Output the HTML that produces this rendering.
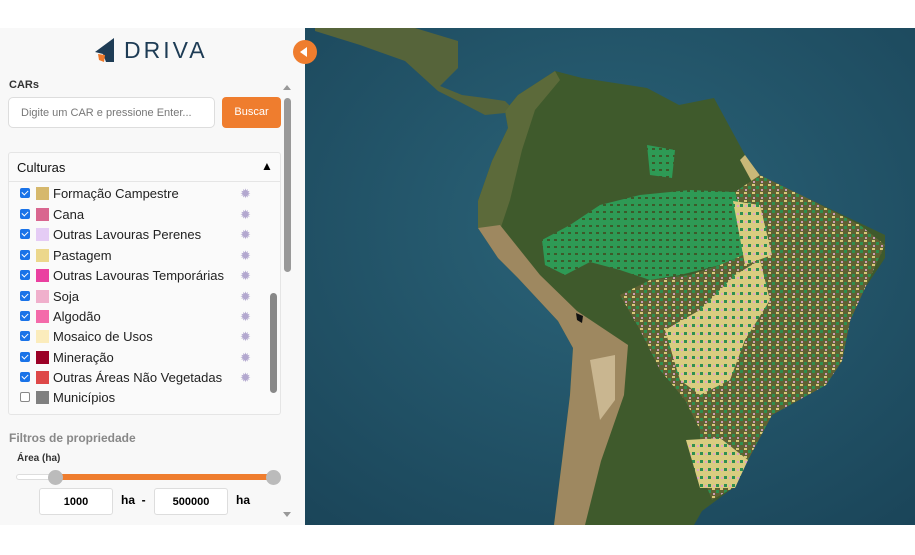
<!DOCTYPE html>
<html><head><meta charset="utf-8"><style>
*{box-sizing:border-box;margin:0;padding:0}
body{width:915px;height:555px;background:#fff;font-family:"Liberation Sans",Arial,sans-serif;position:relative;overflow:hidden}
#side{position:absolute;left:0;top:28px;width:305px;height:497px;background:#f8f8f8}
#map{position:absolute;left:305px;top:28px;width:610px;height:497px;overflow:hidden}
.abs{position:absolute}
.row{position:absolute;left:20px;height:20px;display:flex;align-items:center;font-size:13px;color:#222}
.cb{width:10px;height:10px;background:#1a73e8;border-radius:2px;margin-right:6px;position:relative}
.cb:after{content:"";position:absolute;left:3px;top:1px;width:3px;height:5px;border:solid #fff;border-width:0 1.5px 1.5px 0;transform:rotate(45deg)}
.cb.off{background:#fff;border:1px solid #888}.cb.off:after{display:none}
.sw{width:13px;height:13px;margin-right:4px}
.gear{position:absolute;left:240px;color:#b3a8cf;font-size:13px}
</style></head><body>
<div id="side">
 <svg class="abs" style="left:92px;top:8px" width="26" height="28" viewBox="0 0 26 28"><polygon points="3,16 22,2 22,26 14,26 11,18" fill="#1e3c55"/><polygon points="6,18 13,19 12,26 7,24" fill="#ee7a2c"/></svg>
 <div class="abs" style="left:124px;top:9px;font-size:23px;letter-spacing:3px;color:#1e3c55">DRIVA</div>
 <div class="abs" style="left:9px;top:51px;font-size:11px;font-weight:bold;color:#333">CARs</div>
 <div class="abs" style="left:8px;top:69px;width:207px;height:31px;background:#fff;border:1px solid #ddd;border-radius:5px;font-size:11px;color:#777;padding:9px 12px">Digite um CAR e pressione Enter...</div>
 <div class="abs" style="left:222px;top:69px;width:59px;height:31px;background:#ef7d2e;border-radius:4px;color:#fff;font-size:11px;text-align:center;line-height:31px">Buscar</div>
 <div class="abs" style="left:283px;top:57px;width:0;height:0;border:4px solid transparent;border-bottom:5px solid #999;border-top:0"></div>
 <div class="abs" style="left:284px;top:70px;width:7px;height:174px;background:#999;border-radius:4px"></div>
 <div class="abs" style="left:283px;top:484px;width:0;height:0;border:4px solid transparent;border-top:5px solid #999;border-bottom:0"></div>
 <div class="abs" style="left:8px;top:124px;width:273px;height:263px;background:#fafafa;border:1px solid #e5e5e5;border-radius:3px"></div>
 <div class="abs" style="left:8px;top:124px;width:273px;height:30px;border-bottom:1px solid #e5e5e5"></div>
 <div class="abs" style="left:17px;top:132px;font-size:13px;color:#111">Culturas</div>
 <div class="abs" style="left:261px;top:131px;font-size:12px;color:#000">▲</div>
 <div class="abs" style="left:270px;top:265px;width:7px;height:100px;background:#888;border-radius:4px"></div>
 <div class="row" style="top:155px"><div class="cb"></div><div class="sw" style="background:#d6b86c"></div>Formação Campestre</div>
 <div class="row" style="top:176px"><div class="cb"></div><div class="sw" style="background:#d9668f"></div>Cana</div>
 <div class="row" style="top:196px"><div class="cb"></div><div class="sw" style="background:#e5ccf5"></div>Outras Lavouras Perenes</div>
 <div class="row" style="top:217px"><div class="cb"></div><div class="sw" style="background:#ecd78c"></div>Pastagem</div>
 <div class="row" style="top:237px"><div class="cb"></div><div class="sw" style="background:#ea40a0"></div>Outras Lavouras Temporárias</div>
 <div class="row" style="top:258px"><div class="cb"></div><div class="sw" style="background:#f0b0cc"></div>Soja</div>
 <div class="row" style="top:278px"><div class="cb"></div><div class="sw" style="background:#f46aaa"></div>Algodão</div>
 <div class="row" style="top:298px"><div class="cb"></div><div class="sw" style="background:#fbecbc"></div>Mosaico de Usos</div>
 <div class="row" style="top:319px"><div class="cb"></div><div class="sw" style="background:#9b0026"></div>Mineração</div>
 <div class="row" style="top:339px"><div class="cb"></div><div class="sw" style="background:#de4848"></div>Outras Áreas Não Vegetadas</div>
 <div class="row" style="top:359px"><div class="cb off"></div><div class="sw" style="background:#808080"></div>Municípios</div>
 <div class="gear" style="top:158px">✹</div><div class="gear" style="top:179px">✹</div><div class="gear" style="top:199px">✹</div><div class="gear" style="top:220px">✹</div><div class="gear" style="top:240px">✹</div><div class="gear" style="top:261px">✹</div><div class="gear" style="top:281px">✹</div><div class="gear" style="top:301px">✹</div><div class="gear" style="top:322px">✹</div><div class="gear" style="top:342px">✹</div>
 <div class="abs" style="left:9px;top:403px;font-size:12px;font-weight:bold;color:#888">Filtros de propriedade</div>
 <div class="abs" style="left:17px;top:425px;font-size:10px;font-weight:bold;color:#333">Área (ha)</div>
 <div class="abs" style="left:16px;top:446px;width:260px;height:6px;background:#fff;border:1px solid #ddd;border-radius:3px"></div>
 <div class="abs" style="left:55px;top:446px;width:218px;height:6px;background:#ef7d2e"></div>
 <div class="abs" style="left:48px;top:442px;width:15px;height:15px;border-radius:50%;background:#bbb"></div>
 <div class="abs" style="left:266px;top:442px;width:15px;height:15px;border-radius:50%;background:#bbb"></div>
 <div class="abs" style="left:39px;top:460px;width:74px;height:27px;background:#fff;border:1px solid #ddd;border-radius:3px;font-size:11px;font-weight:bold;text-align:center;line-height:26px">1000</div>
 <div class="abs" style="left:121px;top:465px;font-size:12px;font-weight:bold">ha&nbsp; -</div>
 <div class="abs" style="left:154px;top:460px;width:74px;height:27px;background:#fff;border:1px solid #ddd;border-radius:3px;font-size:11px;font-weight:bold;text-align:center;line-height:26px">500000</div>
 <div class="abs" style="left:236px;top:465px;font-size:12px;font-weight:bold">ha</div>
</div>
<div id="map">
<svg width="610" height="497" viewBox="305 28 610 497">
<defs>
<radialGradient id="oc" cx="0.5" cy="0.4" r="0.8"><stop offset="0" stop-color="#2b6479"/><stop offset="1" stop-color="#1a4458"/></radialGradient>
<pattern id="gp" width="7" height="7" patternUnits="userSpaceOnUse"><rect width="7" height="7" fill="#2e9a55"/><rect x="1" y="1" width="3" height="2" fill="#3d5a2a"/></pattern>
<pattern id="mp" width="8" height="8" patternUnits="userSpaceOnUse"><rect width="8" height="8" fill="#5f6233"/><rect x="0" y="0" width="3" height="2" fill="#d8c979"/><rect x="4" y="2" width="3" height="3" fill="#2f8f50"/><rect x="1" y="5" width="2" height="2" fill="#c99ab4"/></pattern>
<pattern id="yp" width="8" height="8" patternUnits="userSpaceOnUse"><rect width="8" height="8" fill="#d9cc80"/><rect x="4" y="4" width="3" height="3" fill="#2f8f50"/><rect x="1" y="5" width="2" height="2" fill="#dfa6c4"/></pattern>
</defs>
<rect x="305" y="28" width="610" height="497" fill="url(#oc)"/>
<path d="M315,28 L415,28 L458,41 L458,68 L440,86 L462,95 L485,98 L505,101 L512,108 L505,113 L485,115 L460,102 L438,91 L405,61 L360,45 L315,31 Z" fill="#56643a"/>
<path d="M505,111 L518,95 L555,71 L582,78 L647,88 L679,105 L714,98 L745,155 L764,181 L807,198 L885,235 L885,258 L865,288 L850,321 L842,361 L826,385 L772,415 L756,445 L733,488 L702,511 L694,525 L554,525 L562,461 L570,395 L573,348 L558,321 L518,278 L498,258 L478,228 L478,201 L492,161 L508,128 Z" fill="#3f5a2c"/>
<path d="M508,128 L505,111 L518,95 L555,71 L560,80 L535,110 L522,150 L510,200 L500,230 L478,228 L478,201 L492,161 Z" fill="#5c6a3a"/>
<path d="M478,228 L500,225 L520,250 L540,275 L577,311 L628,345 L624,395 L601,461 L585,525 L554,525 L562,461 L570,395 L573,348 L558,321 L518,278 L498,258 Z" fill="#9e8860"/>
<path d="M590,360 L615,355 L615,400 L600,420 Z" fill="#c9b690"/>
<path d="M745,155 L764,181 L765,190 L752,182 L740,160 Z" fill="#c9b878"/>
<path d="M542,240 L570,225 L600,205 L640,195 L690,190 L735,192 L760,215 L755,250 L720,265 L680,275 L650,280 L620,270 L590,262 L565,275 L545,265 Z" fill="url(#gp)"/>
<path d="M647,145 L675,150 L672,178 L650,175 Z" fill="url(#gp)"/>
<path d="M735,192 L760,175 L807,198 L860,225 L885,245 L865,288 L850,321 L842,361 L826,385 L772,415 L756,445 L733,488 L712,500 L700,470 L700,430 L685,400 L660,370 L640,330 L620,295 L650,280 L690,275 L720,265 L755,250 Z" fill="url(#mp)"/>
<path d="M665,330 L700,310 L735,275 L760,260 L770,300 L745,340 L730,380 L700,395 L680,380 Z" fill="url(#yp)"/>
<path d="M733,201 L760,205 L772,255 L745,265 Z" fill="url(#yp)"/>
<path d="M686,440 L720,438 L748,460 L735,488 L700,488 Z" fill="url(#yp)"/>
<path d="M576,313 L583,316 L582,323 L577,320 Z" fill="#111"/>
</svg>
</div>
<div class="abs" style="left:293px;top:40px;width:24px;height:24px;border-radius:50%;background:#ef7d2e"></div>
<div class="abs" style="left:300px;top:47px;width:0;height:0;border:5px solid transparent;border-right:7px solid #fff;border-left:0"></div>
</body></html>
